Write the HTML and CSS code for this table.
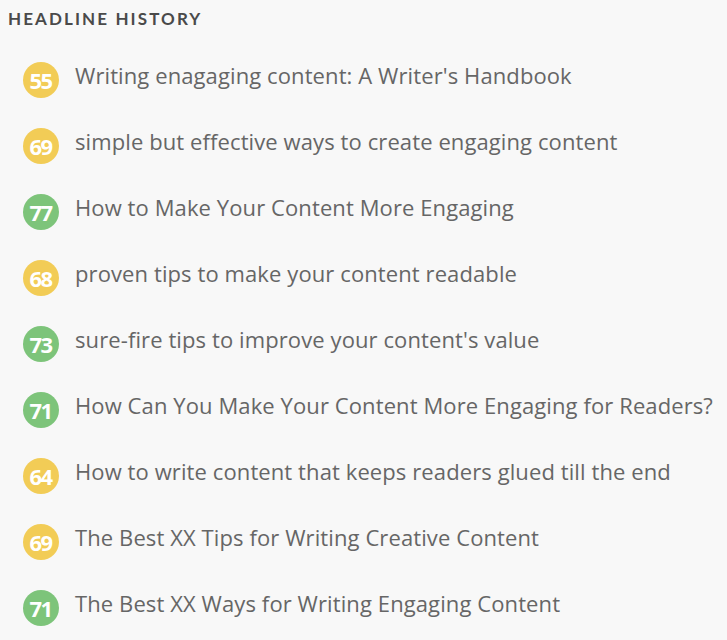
FILE: index.html
```html
<!DOCTYPE html>
<html>
<head>
<meta charset="utf-8">
<link rel="stylesheet" href="styles.css">
</head>
<body>
<div class="panel">
  <h2 class="title">Headline History</h2>
  <ul class="list">
    <li class="row"><span class="score yellow">55</span><span class="text">Writing enagaging content: A Writer's Handbook</span></li>
    <li class="row"><span class="score yellow">69</span><span class="text">simple but effective ways to create engaging content</span></li>
    <li class="row"><span class="score green">77</span><span class="text">How to Make Your Content More Engaging</span></li>
    <li class="row"><span class="score yellow">68</span><span class="text">proven tips to make your content readable</span></li>
    <li class="row"><span class="score green">73</span><span class="text">sure-fire tips to improve your content's value</span></li>
    <li class="row"><span class="score green">71</span><span class="text">How Can You Make Your Content More Engaging for Readers?</span></li>
    <li class="row"><span class="score yellow">64</span><span class="text">How to write content that keeps readers glued till the end</span></li>
    <li class="row"><span class="score yellow">69</span><span class="text">The Best XX Tips for Writing Creative Content</span></li>
    <li class="row"><span class="score green">71</span><span class="text">The Best XX Ways for Writing Engaging Content</span></li>
  </ul>
</div>
</body>
</html>
```

FILE: styles.css
```css
html, body {
  margin: 0;
  padding: 0;
  background: #f8f8f8;
}
body {
  font-family: "Open Sans", Lato, sans-serif;
  color: #666;
}
.panel {
  padding: 9px 0 0 8px;
}
.title {
  margin: 0;
  font-family: Lato, sans-serif;
  font-size: 17px;
  line-height: 20px;
  font-weight: 700;
  letter-spacing: 2.1px;
  text-transform: uppercase;
  color: #4a4a4a;
}
.list {
  list-style: none;
  margin: 33px 0 0 0;
  padding: 0 0 0 15px;
  display: flex;
  flex-direction: column;
  gap: 30px;
}
.row {
  display: flex;
  align-items: center;
  gap: 16px;
  height: 36px;
}
.score {
  flex: none;
  width: 36px;
  height: 36px;
  border-radius: 50%;
  display: flex;
  align-items: center;
  justify-content: center;
  color: #fff;
  font-family: "Open Sans", sans-serif;
  font-weight: 700;
  font-size: 22px;
  letter-spacing: -1.5px;
  text-indent: -1px;
}
.yellow { background: #f2cc56; }
.green { background: #7dc47a; }
.text {
  font-size: 22px;
  letter-spacing: 0.1px;
  color: #666;
  white-space: nowrap;
  margin-top: -10px;
}
```
